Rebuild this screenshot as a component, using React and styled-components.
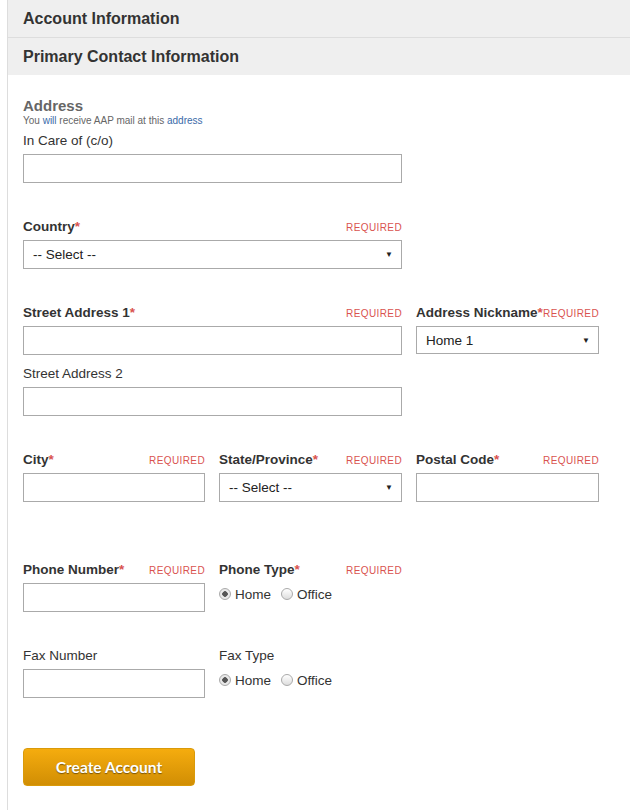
import React from "react";
import styled, { createGlobalStyle } from "styled-components";

const Global = createGlobalStyle`
  body { margin: 0; font-family: "Liberation Sans", Arial, sans-serif; color: #333; background: #fff; }
`;

const Page = styled.div`
  margin-left: 7px;
  border-left: 1px solid #ddd;
  min-height: 810px;
`;
const Header = styled.div`
  background: #efefef;
  height: ${p => p.$h}px;
  display: flex;
  align-items: center;
  padding-left: 15px;
  font-size: 16px;
  font-weight: bold;
  color: #333;
  border-bottom: ${p => (p.$line ? "1px solid #ddd" : "none")};
`;
const Body = styled.div`
  padding: 22px 0 0 15px;
`;
const Title = styled.div`
  font-size: 15px;
  font-weight: bold;
  color: #666;
  line-height: 17px;
`;
const Sub = styled.div`
  font-size: 10px;
  color: #666;
  line-height: 12px;
  margin-top: 1px;
  span { color: #3a6aa8; }
`;
const Grid = styled.div`
  display: grid;
  grid-template-columns: 182px 183px 183px;
  column-gap: 14px;
  margin-top: ${p => p.$mt}px;
`;
const Field = styled.div`
  grid-column: span ${p => p.$span || 1};
`;
const LabelRow = styled.div`
  display: flex;
  justify-content: space-between;
  align-items: baseline;
  height: 16px;
  line-height: 16px;
  margin-bottom: 5px;
`;
const Label = styled.span`
  font-size: 13.5px;
  font-weight: ${p => (p.$bold ? "bold" : "normal")};
  color: #333;
  sup, i { color: #d9534f; font-style: normal; }
`;
const Req = styled.span`
  font-size: 10px;
  color: #d9534f;
  letter-spacing: 0.4px;
`;
const Input = styled.div`
  height: 29px;
  box-sizing: border-box;
  border: 1px solid #aaa;
  background: #fff;
`;
const Select = styled.div`
  height: ${p => p.$h || 29}px;
  box-sizing: border-box;
  border: 1px solid #aaa;
  background: #fff;
  display: flex;
  align-items: center;
  justify-content: space-between;
  padding: 0 8px 0 9px;
  font-size: 13.5px;
  color: #222;
  &::after { content: "▼"; font-size: 8px; color: #222; }
`;
const Radios = styled.div`
  display: flex;
  align-items: center;
  gap: 10px;
  font-size: 13.5px;
  color: #333;
  height: 22px;
`;
const Radio = styled.span`
  display: inline-flex;
  align-items: center;
  gap: 4px;
  &::before {
    content: "";
    width: 12px; height: 12px; box-sizing: border-box;
    border-radius: 50%;
    border: 1px solid #aaa;
    background: ${p => (p.$on ? "radial-gradient(circle, #555 0 2.5px, #e8e8e8 3px)" : "linear-gradient(#fff, #ddd)")};
  }
`;
const Button = styled.button`
  margin: 50px 0 0 0;
  width: 172px;
  height: 38px;
  border: 1px solid #d99a0a;
  border-radius: 4px;
  background: linear-gradient(#f5ac0e, #d18e04);
  color: #fff;
  font-family: "Lato", "Liberation Sans", sans-serif;
  font-weight: bold;
  font-size: 15.5px;
  text-shadow: 0 1px 1px rgba(0,0,0,0.45);
`;

const F = ({ label, bold, req, span, children }) => (
  <Field $span={span}>
    <LabelRow>
      <Label $bold={bold}>{label}{req && <i>*</i>}</Label>
      {req && <Req>REQUIRED</Req>}
    </LabelRow>
    {children}
  </Field>
);

export default function App() {
  return (
    <Page>
      <Global />
      <Header $h={37} $line>Account Information</Header>
      <Header $h={37}>Primary Contact Information</Header>
      <Body>
        <Title>Address</Title>
        <Sub>You <span>will</span> receive AAP mail at this <span>address</span></Sub>
        <Grid $mt={6}><F label="In Care of (c/o)" span={2}><Input /></F></Grid>
        <Grid $mt={36}><F label="Country" bold req span={2}><Select>-- Select --</Select></F></Grid>
        <Grid $mt={36}>
          <F label="Street Address 1" bold req span={2}><Input /></F>
          <F label="Address Nickname" bold req><Select $h={28}>Home 1</Select></F>
        </Grid>
        <Grid $mt={11}><F label="Street Address 2" span={2}><Input /></F></Grid>
        <Grid $mt={36}>
          <F label="City" bold req><Input /></F>
          <F label="State/Province" bold req><Select>-- Select --</Select></F>
          <F label="Postal Code" bold req><Input /></F>
        </Grid>
        <Grid $mt={60}>
          <F label="Phone Number" bold req><Input /></F>
          <F label="Phone Type" bold req>
            <Radios><Radio $on>Home</Radio><Radio>Office</Radio></Radios>
          </F>
        </Grid>
        <Grid $mt={36}>
          <F label="Fax Number"><Input /></F>
          <F label="Fax Type">
            <Radios><Radio $on>Home</Radio><Radio>Office</Radio></Radios>
          </F>
        </Grid>
        <Button>Create Account</Button>
      </Body>
    </Page>
  );
}
